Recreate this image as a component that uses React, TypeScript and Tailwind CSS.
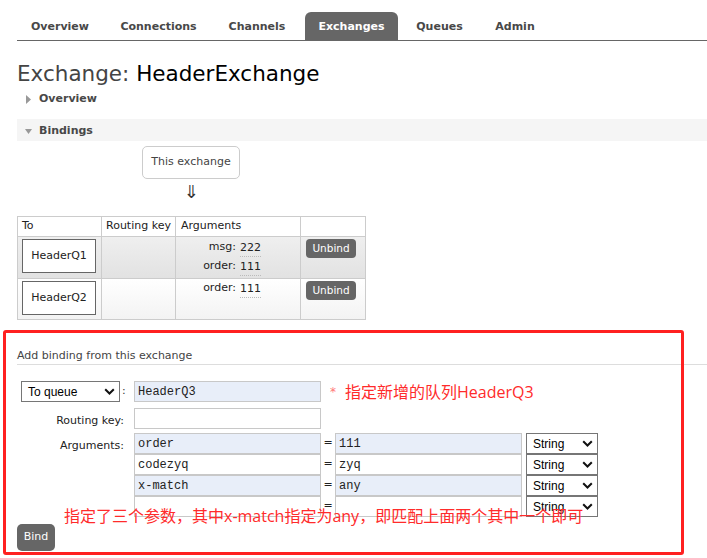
import React from "react";

const tabs = [
  { label: "Overview", w: "w-[86px]", active: false },
  { label: "Connections", w: "w-[101px]", active: false },
  { label: "Channels", w: "w-[86px]", active: false },
  { label: "Exchanges", w: "w-[93px]", active: true },
  { label: "Queues", w: "w-[73px]", active: false },
  { label: "Admin", w: "w-[68px]", active: false },
];

const args = [
  { k: "order", v: "111", filled: true },
  { k: "codezyq", v: "zyq", filled: false },
  { k: "x-match", v: "any", filled: true },
  { k: "", v: "", filled: false },
];

const Chevron = () => (
  <svg width="11" height="7" viewBox="0 0 11 7" className="shrink-0">
    <path d="M1.2 1.2 L5.5 5.5 L9.8 1.2" fill="none" stroke="#111" strokeWidth="2" />
  </svg>
);

const Select = ({ value, w }: { value: string; w: string }) => (
  <div
    className={`${w} h-[21px] border border-[#767676] bg-white flex items-center justify-between pl-[6px] pr-[4px] font-['Liberation_Sans',sans-serif] text-[12px] text-black`}
  >
    <span>{value}</span>
    <Chevron />
  </div>
);

const TextInput = ({ value, filled, w }: { value: string; filled: boolean; w: string }) => (
  <div
    className={`${w} h-[21px] border border-[#c8c8c8] ${filled ? "bg-[#e8eef9]" : "bg-white"} flex items-center pl-[3px] font-['Liberation_Mono',monospace] text-[12px] text-[#222]`}
  >
    {value}
  </div>
);

const ArgLine = ({ k, v }: { k: string; v: string }) => (
  <div className="flex leading-[18px]">
    <span className="w-[60px] text-right">{k}:</span>
    <span className="ml-[4px] border-b border-dotted border-[#bbb] leading-[16px] mt-[2px] h-[17px]">{v}</span>
  </div>
);

export default function App() {
  return (
    <div className="relative w-[707px] h-[558px] overflow-hidden bg-white font-['DejaVu_Sans',sans-serif] text-[11px] text-[#333]">
      {/* Menu tabs */}
      <div className="ml-[17px] mt-[12px] h-[29px] flex gap-[5px] border-b border-[#666]">
        {tabs.map((t) => (
          <div
            key={t.label}
            className={`${t.w} h-[28px] pt-[3px] flex items-center justify-center font-bold ${
              t.active ? "bg-[#666] text-white rounded-t-[6px]" : "text-[#484848]"
            }`}
          >
            {t.label}
          </div>
        ))}
      </div>

      <div className="pl-[17px]">
        {/* Title */}
        <h1 className="mt-[20px] h-[26px] leading-[26px] text-[21.5px] text-[#444]">
          Exchange: <span className="text-black">HeaderExchange</span>
        </h1>

        {/* Overview (collapsed) */}
        <div className="mt-[5px] h-[14px] flex items-center pl-[9px] gap-[8px]">
          <svg width="5" height="9" viewBox="0 0 5 9">
            <polygon points="0,0 5,4.5 0,9" fill="#999" />
          </svg>
          <span className="font-bold text-[#484848] leading-[14px]">Overview</span>
        </div>

        {/* Bindings header */}
        <div className="mt-[13px] h-[22px] pt-[2px] bg-[#f5f5f5] flex items-center pl-[8px] gap-[7px]">
          <svg width="7" height="5" viewBox="0 0 7 5">
            <polygon points="0,0 7,0 3.5,5" fill="#999" />
          </svg>
          <span className="font-bold text-[#484848]">Bindings</span>
        </div>

        {/* This exchange */}
        <div className="ml-[125px] w-[98px] flex flex-col items-center">
          <div className="mt-[5px] w-[98px] h-[33px] border border-[#ccc] rounded-[5px] flex items-center justify-center text-[#444]">
            This exchange
          </div>
          <div className="mt-[2px] h-[21px] leading-[21px] text-[18px] text-[#333]">⇓</div>
        </div>

        {/* Bindings table */}
        <div className="mt-[14px] w-[349px] grid grid-cols-[84px_74px_125px_65px] border-l border-t border-[#ccc] text-[#222]">
          <div className="h-[20px] border-r border-b border-[#ccc] pl-[4px] flex items-center">To</div>
          <div className="h-[20px] border-r border-b border-[#ccc] pl-[4px] flex items-center">Routing key</div>
          <div className="h-[20px] border-r border-b border-[#ccc] pl-[5px] flex items-center">Arguments</div>
          <div className="h-[20px] border-r border-b border-[#ccc]" />

          {/* row 1 */}
          <div className="h-[42px] border-r border-b border-[#ccc] bg-linear-to-b from-[#efefef] to-[#e2e2e2] pl-[4px] pt-[2px]">
            <div className="w-[74px] h-[34px] border border-[#666] bg-white flex items-center justify-center">HeaderQ1</div>
          </div>
          <div className="h-[42px] border-r border-b border-[#ccc] bg-linear-to-b from-[#efefef] to-[#e2e2e2]" />
          <div className="h-[42px] border-r border-b border-[#ccc] bg-linear-to-b from-[#efefef] to-[#e2e2e2] pt-[1px]">
            <ArgLine k="msg" v="222" />
            <ArgLine k="order" v="111" />
          </div>
          <div className="h-[42px] border-r border-b border-[#ccc] bg-linear-to-b from-[#efefef] to-[#e2e2e2] pl-[5px] pt-[2px]">
            <div className="w-[50px] h-[19px] rounded-[4px] bg-[#666] text-white text-[10.5px] flex items-center justify-center">Unbind</div>
          </div>

          {/* row 2 */}
          <div className="h-[41px] border-r border-b border-[#ccc] bg-linear-to-b from-white to-[#f3f3f3] pl-[4px] pt-[2px]">
            <div className="w-[74px] h-[34px] border border-[#666] bg-white flex items-center justify-center">HeaderQ2</div>
          </div>
          <div className="h-[41px] border-r border-b border-[#ccc] bg-linear-to-b from-white to-[#f3f3f3]" />
          <div className="h-[41px] border-r border-b border-[#ccc] bg-linear-to-b from-white to-[#f3f3f3]">
            <ArgLine k="order" v="111" />
          </div>
          <div className="h-[41px] border-r border-b border-[#ccc] bg-linear-to-b from-white to-[#f3f3f3] pl-[5px] pt-[2px]">
            <div className="w-[50px] h-[19px] rounded-[4px] bg-[#666] text-white text-[10.5px] flex items-center justify-center">Unbind</div>
          </div>
        </div>

        {/* Add binding */}
        <div className="mt-[29px] h-[16px] leading-[14px] border-b border-[#ddd] text-[#444]">Add binding from this exchange</div>

        <div className="mt-[16px] flex flex-col">
          {/* destination row */}
          <div className="flex items-center">
            <div className="w-[117px] flex items-center pl-[4px]">
              <Select value="To queue" w="w-[99px]" />
              <span className="ml-[2px]">:</span>
            </div>
            <TextInput value="HeaderQ3" filled w="w-[187px]" />
            <span className="ml-[9px] text-[12px] text-[#f77]">*</span>
            <span className="ml-[9px] font-['Open_Sans','Noto_Sans_CJK_SC',sans-serif] text-[16px] leading-[20px] text-[#ff2b2b]">
              指定新增的队列HeaderQ3
            </span>
          </div>

          {/* routing key */}
          <div className="mt-[6px] flex">
            <div className="w-[117px] pr-[10px] text-right pt-[6px] leading-[14px] text-[#222]">Routing key:</div>
            <TextInput value="" filled={false} w="w-[187px]" />
          </div>

          {/* arguments */}
          <div className="mt-[4px] flex">
            <div className="w-[117px] pr-[10px] text-right pt-[6px] leading-[14px] text-[#222]">Arguments:</div>
            <div className="flex flex-col">
              {args.map((a, i) => (
                <div key={i} className="flex items-center">
                  <TextInput value={a.k} filled={a.filled} w="w-[187px]" />
                  <span className="w-[14px] text-center text-[#222]">=</span>
                  <TextInput value={a.v} filled={a.filled} w="w-[187px]" />
                  <div className="ml-[4px]">
                    <Select value="String" w="w-[72px]" />
                  </div>
                </div>
              ))}
            </div>
          </div>
        </div>

        <div className="mt-[7px] w-[38px] h-[27px] rounded-[5px] bg-[#666] text-white flex items-center justify-center">Bind</div>
      </div>

      {/* annotation overlay */}
      <div className="absolute left-[3px] top-[330px] w-[681px] h-[225px] border-[3px] border-[#ff2020] rounded-[3px] pointer-events-none" />
      <div className="absolute left-[64px] top-[506px] font-['Open_Sans','Noto_Sans_CJK_SC',sans-serif] text-[16px] leading-[20px] text-[#ff2b2b] whitespace-nowrap">
        指定了三个参数，其中x-match指定为any，即匹配上面两个其中一个即可
      </div>
    </div>
  );
}
